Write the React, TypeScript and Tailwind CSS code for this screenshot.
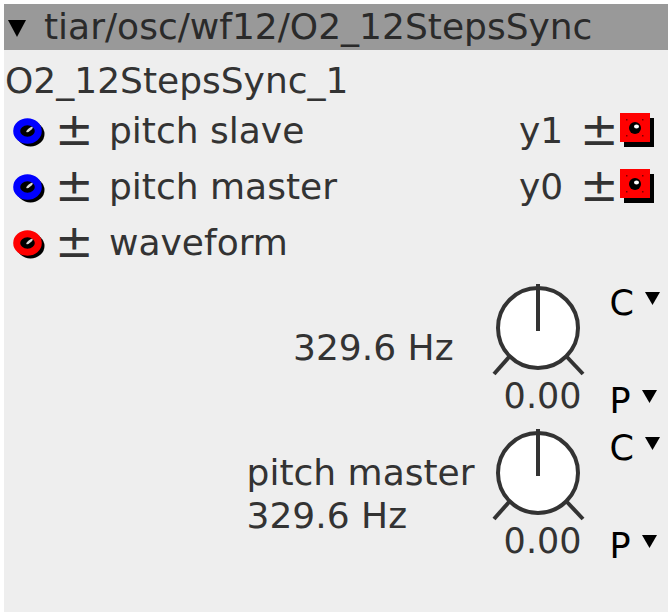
import React from 'react';

const font = { fontFamily: '"DejaVu Sans", sans-serif' };

const Inlet = ({ color }: { color: string }) => (
  <svg width="48" height="36" viewBox="0 0 48 36" className="shrink-0">
    <ellipse cx="26.5" cy="21" rx="14" ry="12.5" fill="#000" />
    <ellipse cx="23.5" cy="18" rx="10.8" ry="9.2" fill="none" stroke={color} strokeWidth="7" />
    <ellipse cx="25.5" cy="16.5" rx="4" ry="1.3" transform="rotate(-40 25.5 16.5)" fill="#d8d8d8" />
  </svg>
);

const Outlet = () => (
  <svg width="40" height="40" viewBox="0 0 40 40" className="shrink-0">
    <rect x="4" y="5" width="30" height="29" fill="#000" />
    <rect x="0" y="0" width="30" height="29" fill="#ff0000" />
    <circle cx="15" cy="15" r="6" fill="#000" />
    <ellipse cx="16.5" cy="13.5" rx="2.5" ry="2" fill="#fff" />
    <g fill="#7a0000">
      <rect x="6" y="6" width="1.5" height="1.5" />
      <rect x="22" y="6" width="1.5" height="1.5" />
      <rect x="6" y="22" width="1.5" height="1.5" />
      <rect x="22" y="22" width="1.5" height="1.5" />
    </g>
  </svg>
);

const PlusMinus = () => (
  <span className="text-[46px] leading-[56px] text-[#333]">±</span>
);

const Knob = () => (
  <svg width="96" height="94" viewBox="0 0 96 94">
    <circle cx="48" cy="46" r="40" fill="#fff" stroke="#333" strokeWidth="4" />
    <line x1="48" y1="2" x2="48" y2="49" stroke="#333" strokeWidth="4" />
    <line x1="4" y1="92" x2="19" y2="75" stroke="#333" strokeWidth="4" />
    <line x1="77" y1="75" x2="93" y2="92" stroke="#333" strokeWidth="4" />
  </svg>
);

const Caret = () => (
  <svg width="15" height="13" viewBox="0 0 15 13" className="shrink-0 ml-[11px] mt-[6px]">
    <polygon points="0,0 15,0 7.5,13" fill="#000" />
  </svg>
);

const KnobControls = () => (
  <>
    <div className="flex flex-col w-[96px]">
      <div className="mt-[11px]">
        <Knob />
      </div>
      <div className="mt-[3px] pr-[4px] text-right text-[35px] leading-[34px] text-[#333]">0.00</div>
    </div>
    <div className="flex flex-col ml-[24px] text-black text-[35px] leading-[35px]">
      <div className="flex items-start mt-[15px]">
        <span>C</span>
        <Caret />
      </div>
      <div className="flex items-start mt-[63px]">
        <span>P</span>
        <Caret />
      </div>
    </div>
  </>
);

const inlets = [
  { name: 'pitch slave', color: '#0000ff', out: 'y1' },
  { name: 'pitch master', color: '#0000ff', out: 'y0' },
  { name: 'waveform', color: '#ff0000', out: '' },
];

export default function App() {
  return (
    <div className="bg-white min-h-screen pt-[4px] pl-[4px]" style={font}>
      <div className="w-[664px] h-[608px] bg-[#eeeeee] flex flex-col text-[#333]">
        <div className="h-[46px] bg-[#999999] flex items-center pl-[4px] text-[36px] leading-[46px] text-[#2a2a2a]">
          <svg width="18" height="17" viewBox="0 0 18 17" className="shrink-0 mr-[18px] mt-[2px]">
            <polygon points="0,0 18,0 9,17" fill="#000" />
          </svg>
          <span>tiar/osc/wf12/O2_12StepsSync</span>
        </div>
        <div className="h-[53px] pt-[10px] pl-[1px] text-[36px] leading-[42px]">O2_12StepsSync_1</div>
        {inlets.map((r) => (
          <div key={r.name} className="h-[56px] flex items-center text-[36px] leading-[56px]">
            <Inlet color={r.color} />
            <div className="w-[57px] pl-[3px]">
              <PlusMinus />
            </div>
            <span className="flex-1">{r.name}</span>
            {r.out && (
              <div className="flex items-center">
                <span className="w-[61px]">{r.out}</span>
                <div className="w-[40px]">
                  <PlusMinus />
                </div>
                <div className="mt-[4px] mr-[8px]">
                  <Outlet />
                </div>
              </div>
            )}
          </div>
        ))}
        <div className="h-[145px] flex justify-end items-start pr-[8px]">
          <div className="mt-[56px] mr-[36px] text-[36px] leading-[42px]">329.6 Hz</div>
          <KnobControls />
        </div>
        <div className="h-[145px] flex justify-end items-start pr-[8px]">
          <div className="mt-[35px] mr-[15px] text-[36px] leading-[43px]">
            <div>pitch master</div>
            <div>329.6 Hz</div>
          </div>
          <KnobControls />
        </div>
      </div>
    </div>
  );
}
